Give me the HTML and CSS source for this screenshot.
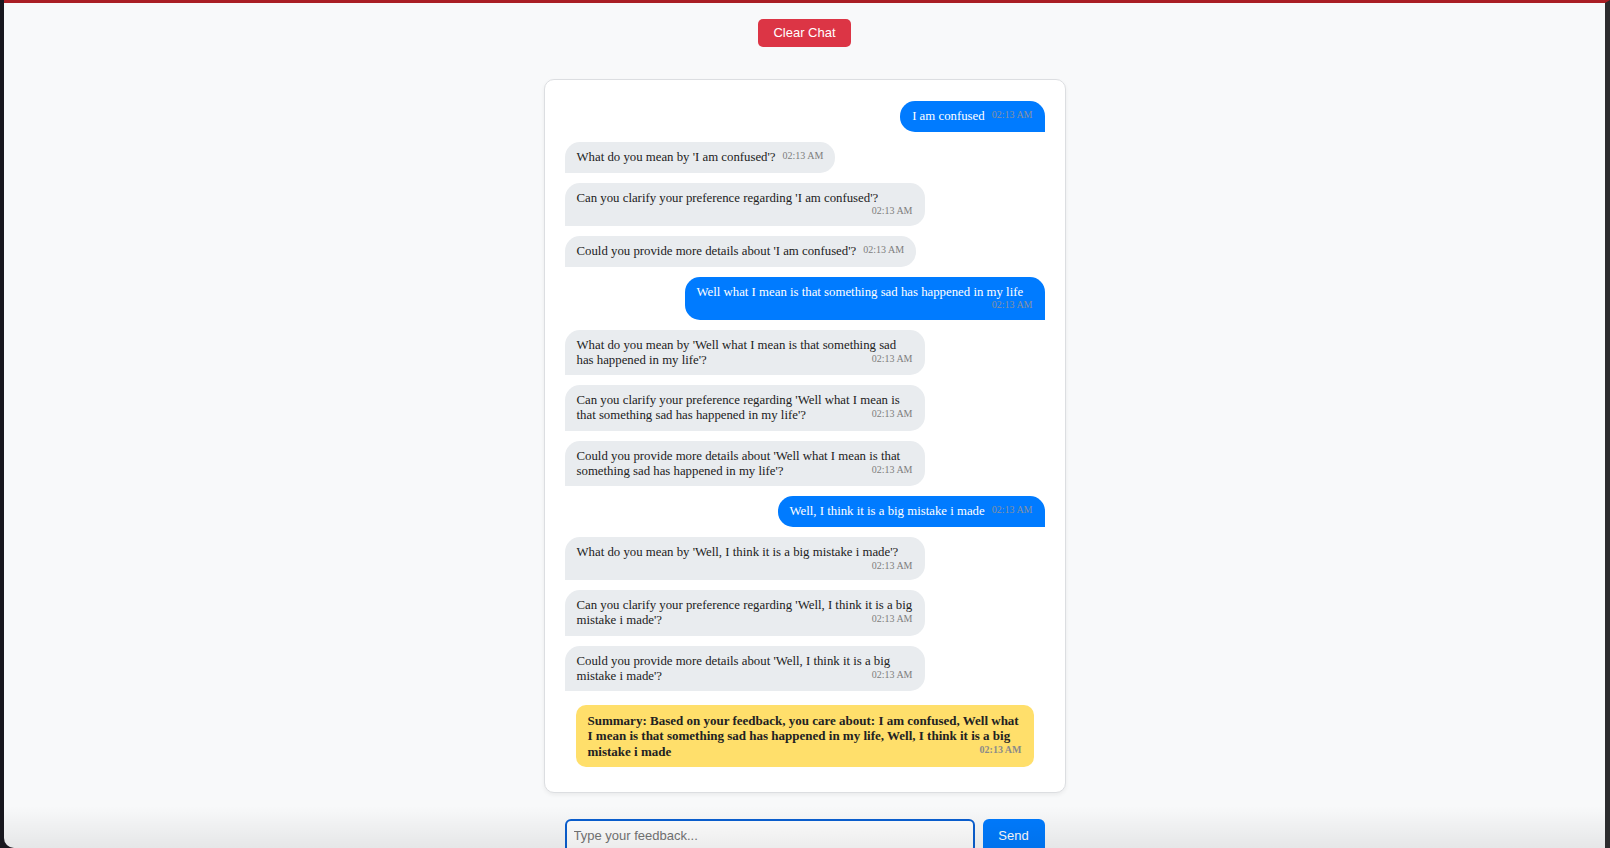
FILE: index.html
```html
<!DOCTYPE html>
<html lang="en">
<head>
<meta charset="utf-8">
<title>Feedback Chat</title>
<link rel="stylesheet" href="styles.css">
</head>
<body>
<div class="window">
  <div class="app">
    <button class="clear-btn" type="button">Clear Chat</button>
    <div class="chat-card">
      <div class="msg user">I am confused<span class="time">02:13 AM</span></div>
      <div class="msg bot">What do you mean by 'I am confused'?<span class="time">02:13 AM</span></div>
      <div class="msg bot">Can you clarify your preference regarding 'I am confused'?<span class="time">02:13 AM</span></div>
      <div class="msg bot">Could you provide more details about 'I am confused'?<span class="time">02:13 AM</span></div>
      <div class="msg user">Well what I mean is that something sad has happened in my life<span class="time">02:13 AM</span></div>
      <div class="msg bot">What do you mean by 'Well what I mean is that something sad has happened in my life'?<span class="time">02:13 AM</span></div>
      <div class="msg bot">Can you clarify your preference regarding 'Well what I mean is that something sad has happened in my life'?<span class="time">02:13 AM</span></div>
      <div class="msg bot">Could you provide more details about 'Well what I mean is that something sad has happened in my life'?<span class="time">02:13 AM</span></div>
      <div class="msg user">Well, I think it is a big mistake i made<span class="time">02:13 AM</span></div>
      <div class="msg bot">What do you mean by 'Well, I think it is a big mistake i made'?<span class="time">02:13 AM</span></div>
      <div class="msg bot">Can you clarify your preference regarding 'Well, I think it is a big mistake i made'?<span class="time">02:13 AM</span></div>
      <div class="msg bot">Could you provide more details about 'Well, I think it is a big mistake i made'?<span class="time">02:13 AM</span></div>
      <div class="msg summary">Summary: Based on your feedback, you care about: I am confused, Well what I mean is that something sad has happened in my life, Well, I think it is a big mistake i made<span class="time">02:13 AM</span></div>
    </div>
    <div class="input-row">
      <input class="feedback-input" type="text" placeholder="Type your feedback...">
      <button class="send-btn" type="button">Send</button>
    </div>
  </div>
  <div class="bottom-fade"></div>
</div>
</body>
</html>
```
FILE: styles.css
```css
* { box-sizing: border-box; }

html, body {
  margin: 0;
  padding: 0;
  height: 848px;
  overflow: hidden;
}

body {
  background: #18171e;
}

.window {
  position: relative;
  height: 848px;
  margin-left: 4px;
  background: #f8f9fa;
  border-top: 3px solid #a91e24;
  border-right: 5px solid #2c2c2e;
  border-bottom-left-radius: 10px;
  overflow: hidden;
}

.app {
  display: flex;
  flex-direction: column;
  align-items: center;
  padding-top: 16px;
}

.clear-btn {
  font-family: "Liberation Sans", Arial, sans-serif;
  font-size: 13px;
  line-height: 16px;
  padding: 6px 15px;
  color: #fff;
  background: #dc3545;
  border: none;
  border-radius: 5px;
}

.chat-card {
  margin-top: 32px;
  width: 522px;
  padding: 21px 20px 20px;
  background: #fff;
  border: 1px solid #dcdee1;
  border-radius: 10px;
  box-shadow: 0 2px 4px rgba(0, 0, 0, 0.06);
  display: flex;
  flex-direction: column;
  gap: 10px;
}

.msg {
  max-width: 75%;
  padding: 8px 12px;
  font-family: "Liberation Serif", "Times New Roman", serif;
  font-size: 12.8px;
  line-height: 14.75px;
  border-radius: 15px;
}

.user {
  align-self: flex-end;
  background: #007bff;
  color: #fff;
  border-bottom-right-radius: 0;
}

.bot {
  align-self: flex-start;
  background: #e9ecef;
  color: #222;
  border-bottom-left-radius: 0;
}

.summary {
  align-self: stretch;
  max-width: none;
  margin: 4px 11px 5px;
  background: #ffdf6b;
  color: #222;
  font-size: 13px;
  line-height: 15.2px;
  font-weight: bold;
  border-radius: 10px;
}

.time {
  float: right;
  margin-left: 7px;
  font-size: 10px;
  line-height: 12.5px;
  color: #7d7d7d;
}

.user .time {
  color: #8a929e;
}

.summary .time {
  color: #8a8a8a;
}

.input-row {
  margin-top: 26px;
  width: 480px;
  display: flex;
  gap: 8px;
}

.feedback-input {
  flex: 1;
  height: 34px;
  padding: 0 7px;
  font-family: "Liberation Sans", Arial, sans-serif;
  font-size: 13px;
  border: 2px solid #0a5fd1;
  border-radius: 6px;
  background: #fff;
  outline: none;
}

.feedback-input::placeholder {
  color: #757575;
}

.send-btn {
  width: 62px;
  height: 34px;
  font-family: "Liberation Sans", Arial, sans-serif;
  font-size: 13px;
  color: #fff;
  background: #007bff;
  border: none;
  border-radius: 6px;
}

.bottom-fade {
  position: absolute;
  left: 0;
  right: 0;
  bottom: 0;
  height: 42px;
  background: linear-gradient(to bottom, rgba(0, 0, 0, 0), rgba(0, 0, 0, 0.075));
  pointer-events: none;
}
```
